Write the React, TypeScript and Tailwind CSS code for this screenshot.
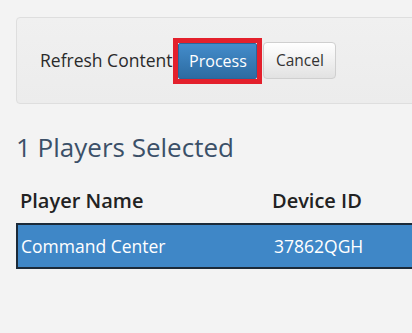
import React from "react";

export default function App() {
  return (
    <div
      className="w-[412px] h-[333px] overflow-hidden bg-[#f3f3f3] pl-4 pt-[17px]"
      style={{ fontFamily: '"Open Sans", "Liberation Sans", sans-serif' }}
    >
      <div className="w-[420px] h-[87px] rounded-[4px] border border-[#dedede] bg-gradient-to-b from-[#f0f0f0] to-[#ececec] flex items-center pl-[23px]">
        <span className="text-[17.5px] text-[#2a2a2a]">Refresh Content</span>
        <div className="border-[5px] border-[#e3202c] ml-[1px]">
          <button className="h-[36px] w-[79px] rounded-[2px] border border-[#2b669a] bg-gradient-to-b from-[#438ccb] to-[#2d6ca2] text-white text-[16px] leading-none">
            Process
          </button>
        </div>
        <button className="ml-[1px] h-[37px] w-[73px] rounded-[4px] border border-[#cfcfcf] bg-gradient-to-b from-white to-[#e2e2e2] text-[#333] text-[15.5px] leading-none">
          Cancel
        </button>
      </div>
      <div className="mt-[30px] text-[26px] leading-none text-[#3b5068]">1 Players Selected</div>
      <div className="mt-[31px] flex text-[20px] font-semibold text-[#222] leading-none pl-[4px]">
        <span className="w-[252px]">Player Name</span>
        <span>Device ID</span>
      </div>
      <div className="mt-[12px] w-[420px] h-[46px] border-2 border-[#1b2a39] bg-[#3f87c7] flex items-center pl-[3px] text-[17.5px] text-white">
        <span className="w-[253px]">Command Center</span>
        <span>37862QGH</span>
      </div>
    </div>
  );
}
